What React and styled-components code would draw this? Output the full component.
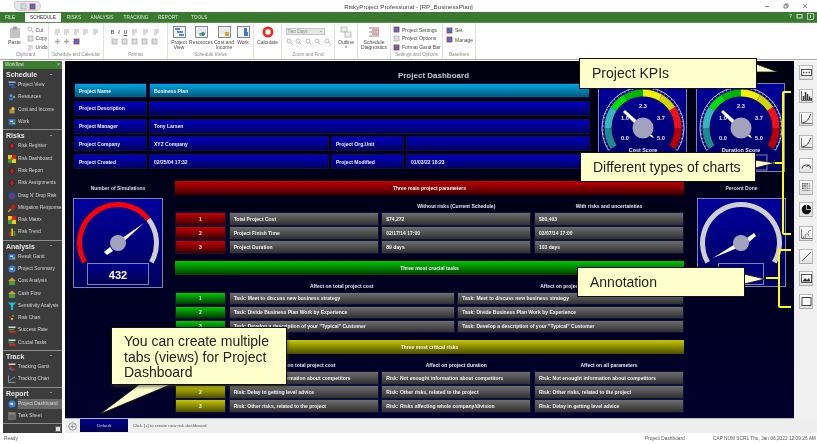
import React from 'react';
import styled, { createGlobalStyle } from 'styled-components';

const GlobalStyle = createGlobalStyle`
  html, body { margin: 0; padding: 0; background: #fff; }
  body { font-family: "Liberation Sans", Arial, sans-serif; }
  * { box-sizing: border-box; }
`;

const fills = {
  blue: 'linear-gradient(#0000c4, #00005c)',
  cyan: 'linear-gradient(#00a4e4, #005a78)',
  gray: 'linear-gradient(#6e6e6e, #303030)',
  red: 'linear-gradient(#c80000, #3c0000)',
  green: 'linear-gradient(#00c800, #003c00)',
  olive: 'linear-gradient(#c8c800, #4c4c00)',
};

const Window = styled.div`
  position: relative;
  width: 817px;
  height: 444px;
  overflow: hidden;
  background: #fff;
  filter: blur(0.35px);
`;

const TitleBar = styled.div`
  position: relative;
  height: 12px;
  display: flex;
  align-items: center;
  justify-content: center;
  font-size: 6.2px;
  color: #444;
`;

const QuickAccess = styled.div`
  position: absolute;
  left: 14px;
  top: 1px;
  width: 27px;
  height: 10px;
  background: #e4e8ec;
  border: 1px solid #c8ccd0;
  border-radius: 2px 6px 6px 6px;
  display: flex;
  align-items: center;
  justify-content: center;
  gap: 2px;
`;

const WindowControls = styled.div`
  position: absolute;
  right: 9px;
  top: 3px;
  display: flex;
  gap: 13px;
  color: #555;
  svg { display: block; }
`;

const TabBar = styled.div`
  position: relative;
  height: 10px;
  background: #3a7a30;
  display: flex;
  align-items: stretch;
  font-size: 4.8px;
  padding-left: 3px;
`;

const FileTab = styled.div`
  width: 22px;
  color: #e8f0e4;
  display: flex;
  align-items: center;
  padding-left: 2px;
`;

const RibbonTab = styled.div`
  width: ${(p) => p.$w}px;
  display: flex;
  align-items: center;
  justify-content: center;
  color: ${(p) => (p.$active ? '#333' : '#dfe9da')};
  background: ${(p) => (p.$active ? '#fff' : 'transparent')};
  margin-top: ${(p) => (p.$active ? '1px' : '0')};
`;

const HelpIcons = styled.div`
  position: absolute;
  right: 3px;
  top: 1px;
  display: flex;
  gap: 4px;
  align-items: center;
  color: #fff;
  svg { display: block; }
`;

const Ribbon = styled.div`
  height: 38px;
  display: flex;
  padding-left: 3px;
  background: #fff;
  border-top: 1px solid #5c9450;
  border-bottom: 1px solid #aaa;
  color: #4a4a4a;
  font-size: 5px;
`;

const Group = styled.div`
  width: ${(p) => p.$w}px;
  border-right: 1px solid #e2e2e2;
  display: flex;
  flex-direction: column;
`;

const GroupBody = styled.div`
  flex: 1;
  display: flex;
  justify-content: ${(p) => p.$justify || 'center'};
  gap: ${(p) => p.$gap || 0}px;
  padding-top: 2px;
  padding-left: ${(p) => p.$left || 0}px;
  min-height: 0;
`;

const GroupLabel = styled.div`
  height: 8px;
  text-align: center;
  color: #8a8a8a;
  font-size: 4.6px;
  line-height: 7px;
  white-space: nowrap;
`;

const BigButton = styled.div`
  width: ${(p) => p.$w || 22}px;
  display: flex;
  flex-direction: column;
  align-items: center;
  text-align: center;
  line-height: 5px;
  white-space: pre-line;
  svg { display: block; margin-bottom: 2px; margin-top: 1px; }
`;

const SmallColumn = styled.div`
  display: flex;
  flex-direction: column;
  gap: 1.5px;
  padding-top: 1px;
`;

const SmallButton = styled.div`
  height: 8px;
  display: flex;
  align-items: center;
  gap: 2px;
  white-space: nowrap;
  svg { display: block; flex: none; }
`;

const IconRows = styled.div`
  display: flex;
  flex-direction: column;
  gap: 3px;
  padding-top: 3px;
`;

const IconRow = styled.div`
  display: flex;
  justify-content: ${(p) => p.$justify || 'flex-start'};
  gap: ${(p) => p.$gap || 2}px;
  align-items: center;
  color: #555;
  font-weight: bold;
  font-size: 5px;
  svg { display: block; }
`;

const Dropdown = styled.div`
  width: 39px;
  height: 7px;
  background: #e6e6e6;
  border: 1px solid #c8c8c8;
  color: #888;
  font-size: 4.6px;
  line-height: 5px;
  padding-left: 1px;
  position: relative;
  &::after {
    content: '';
    position: absolute;
    right: 2px;
    top: 2px;
    border: 1.5px solid transparent;
    border-top-color: #666;
  }
`;

const Body = styled.div`
  height: 372px;
  margin-top: 1px;
  display: flex;
`;

const Sidebar = styled.div`
  width: 59px;
  margin-left: 3px;
  background: #3c3c3c;
  position: relative;
  display: flex;
  flex-direction: column;
`;

const SidebarHead = styled.div`
  height: 8px;
  flex: none;
  background: #3d7d32;
  color: #dbe8d6;
  font-size: 4.6px;
  line-height: 7px;
  padding: 0 2px;
  display: flex;
  justify-content: space-between;
`;

const SidebarSection = styled.div`
  padding: 1px 0;
  border-bottom: 1px solid #8c8c8c;
  &:last-of-type { border-bottom: 0; }
`;

const SectionTitle = styled.div`
  height: 9px;
  padding: 0 10px 0 3px;
  color: #e8e8e8;
  font-size: 7px;
  font-weight: bold;
  line-height: 9px;
  display: flex;
  justify-content: space-between;
  align-items: center;
  &::after {
    content: '';
    border: 1.5px solid transparent;
    border-bottom-color: #ddd;
    margin-top: -2px;
  }
`;

const SidebarItem = styled.div`
  height: 12.3px;
  display: flex;
  align-items: center;
  gap: 2px;
  padding-left: 5px;
  color: #d4d4d4;
  font-size: 4.8px;
  white-space: nowrap;
  svg { display: block; flex: none; }
`;

const ItemLabel = styled.span`
  flex: 1;
  height: 10px;
  line-height: 10px;
  background: ${(p) => (p.$active ? '#6a6a6a' : 'transparent')};
`;

const ExpandButton = styled.div`
  position: absolute;
  right: 1px;
  bottom: 1px;
  width: 6px;
  height: 6px;
  background: #ddd;
  border: 1px solid #666;
`;

const Content = styled.div`
  flex: 1;
  margin-left: 3px;
  min-width: 0;
  display: flex;
  flex-direction: column;
`;

const ContentRow = styled.div`
  height: 358px;
  display: flex;
`;

const Dashboard = styled.div`
  width: 729px;
  background: linear-gradient(#00000f, #00002c);
  padding-left: 8px;
  color: #e6e6f4;
  border-bottom: 1px solid #bbb;
`;

const DashboardTitle = styled.div`
  height: 22px;
  padding-top: 10px;
  text-align: center;
  font-size: 8px;
  line-height: 9px;
  font-weight: bold;
  color: #c8c8d0;
`;

const TopRow = styled.div`
  height: 89px;
  display: flex;
  gap: 8px;
  margin-bottom: 9px;
  padding-left: 1px;
`;

const InfoTable = styled.div`
  width: 516px;
  display: flex;
  flex-direction: column;
  gap: 2.75px;
`;

const InfoRow = styled.div`
  display: grid;
  grid-template-columns: ${(p) => (p.$split ? '73px 180px 73px 1fr' : '73px 1fr')};
  column-gap: 2px;
  height: 15px;
`;

const Cell = styled.div`
  height: 100%;
  background: ${(p) => fills[p.$fill || 'gray']};
  border: 0.5px solid #10103a;
  display: flex;
  align-items: center;
  justify-content: ${(p) => (p.$center ? 'center' : 'flex-start')};
  padding-left: ${(p) => (p.$center ? 0 : 4)}px;
  font-size: 5px;
  font-weight: bold;
  color: #f0f0f8;
  white-space: nowrap;
  overflow: hidden;
`;

const GaugePair = styled.div`
  display: flex;
  gap: 9px;
`;

const GaugePanel = styled.div`
  width: ${(p) => p.$size || 89}px;
  height: ${(p) => p.$size || 89}px;
  background: linear-gradient(#00009c, #00005c);
  border: 1px solid #7f84ac;
  svg { display: block; }
`;

const BottomRow = styled.div`
  display: flex;
  gap: 12px;
`;

const SideColumn = styled.div`
  width: ${(p) => p.$w}px;
  margin-left: ${(p) => p.$left || 0}px;
`;

const SideCaption = styled.div`
  height: 17px;
  padding-top: 4px;
  text-align: center;
  font-size: 5px;
  font-weight: bold;
  color: #d8d8e4;
`;

const CenterColumn = styled.div`
  width: 509px;
  display: flex;
  flex-direction: column;
  gap: 7px;
`;

const Bar = styled.div`
  height: 14px;
  background: ${(p) => fills[p.$fill]};
  display: flex;
  align-items: center;
  justify-content: center;
  font-size: 5px;
  font-weight: bold;
  color: #f4f4f4;
`;

const Columns = styled.div`
  display: grid;
  grid-template-columns: ${(p) => (p.$two ? '51px 226px 227px' : '51px 150px 150px 150px')};
  column-gap: 2.66px;
`;

const ColumnHeads = styled(Columns)`
  height: 17px;
  align-items: end;
  padding-bottom: 3px;
  font-size: 5px;
  font-weight: bold;
  text-align: center;
  color: #e4e4f0;
`;

const Rows = styled.div`
  display: flex;
  flex-direction: column;
  gap: 0.5px;
`;

const DataRow = styled(Columns)`
  height: 13.5px;
`;

const TabStrip = styled.div`
  height: 14px;
  width: 100%;
  flex: none;
  display: flex;
  align-items: stretch;
  background: #eeeeee;
  font-size: 4.4px;
  color: #444;
`;

const AddTab = styled.div`
  width: 15px;
  display: flex;
  align-items: center;
  justify-content: center;
`;

const ActiveTab = styled.div`
  width: 48px;
  background: linear-gradient(#000090, #00004c);
  color: #cfd6f0;
  display: flex;
  align-items: center;
  justify-content: center;
  margin-bottom: 1px;
`;

const TabHint = styled.div`
  display: flex;
  align-items: center;
  padding-left: 5px;
  margin-bottom: 1px;
  color: #555;
`;

const Toolbar = styled.div`
  width: 23px;
  background: #f0f0f0;
  display: flex;
  flex-direction: column;
  align-items: center;
  padding: 4px 0 0 1px;
`;

const ToolButton = styled.div`
  width: 14px;
  height: 14.5px;
  margin-top: ${(p) => p.$top}px;
  background: linear-gradient(#ffffff, #e2e2e2);
  border: 0.5px solid #b8b8b8;
  border-bottom: 1.5px solid #aaa;
  display: flex;
  align-items: center;
  justify-content: center;
  svg { display: block; }
`;

const StatusBar = styled.div`
  height: 11px;
  display: flex;
  align-items: center;
  font-size: 4.8px;
  color: #555;
  padding: 0 1px 0 4px;
`;

const StatusLeft = styled.div`
  width: 641px;
`;

const StatusPage = styled.div`
  width: 68px;
`;

const Callout = styled.div`
  position: absolute;
  left: ${(p) => p.$x}px;
  top: ${(p) => p.$y}px;
  width: ${(p) => p.$w}px;
  height: ${(p) => p.$h}px;
  background: #ffffcc;
  border: 1px solid #111;
  color: #222;
  font-size: 14px;
  line-height: 15.5px;
  padding: ${(p) => p.$pad || '7px 0 0 12px'};
  box-shadow: ${(p) => (p.$shadow ? '1px 2px 3px rgba(60,60,40,0.6)' : 'none')};
`;

const Overlay = styled.svg`
  position: absolute;
  left: 0;
  top: 0;
  pointer-events: none;
`;

const polar = (cx, cy, r, deg) => {
  const a = ((deg - 90) * Math.PI) / 180;
  return [cx + r * Math.cos(a), cy + r * Math.sin(a)];
};

const arcPath = (cx, cy, r, from, to) => {
  const [x1, y1] = polar(cx, cy, r, from);
  const [x2, y2] = polar(cx, cy, r, to);
  const large = to - from > 180 ? 1 : 0;
  return `M${x1} ${y1}A${r} ${r} 0 ${large} 1 ${x2} ${y2}`;
};

const bands = [
  [-123, -90, '#1f8a8a'],
  [-90, -57, '#35b8b8'],
  [-57, -30, '#00e000'],
  [-30, 0, '#00b400'],
  [0, 30, '#f0f000'],
  [30, 57, '#d4d400'],
  [57, 90, '#f21212'],
  [90, 123, '#bb0000'],
];

const scoreLabels = [
  ['0.0', -18, 12],
  ['1.0', -18, -8],
  ['2.3', 0, -20],
  ['3.7', 18, -8],
  ['5.0', 18, 12],
];

const ScoreGauge = ({ caption, valueX }) => {
  const c = 44;
  const ticks = [];
  for (let d = -123; d <= 123; d += 6) {
    const [x1, y1] = polar(c, c, 41, d);
    const [x2, y2] = polar(c, c, d % 30 === 0 ? 37 : 39, d);
    ticks.push(<line key={d} x1={x1} y1={y1} x2={x2} y2={y2} stroke="#e8e8f8" strokeWidth="0.6" />);
  }
  return (
    <GaugePanel>
      <svg width="87" height="87" viewBox="0 0 87 87">
        <path d={arcPath(c, c, 41, -123, 123)} fill="none" stroke="#e8e8f8" strokeWidth="0.8" />
        {ticks}
        {bands.map(([a, b, col]) => (
          <path key={a} d={arcPath(c, c, 35, a, b)} fill="none" stroke={col} strokeWidth="7" />
        ))}
        <polygon points="24,28 26,26 44,42 42,46" fill="#fff" />
        <polygon points="50,50 53,51 55,54 52,53" fill="#fff" />
        <circle cx={c} cy={c} r="10.5" fill="#a2a2bc" />
        {scoreLabels.map(([t, dx, dy]) => (
          <text key={t} x={c + dx} y={c + dy} fill="#e8e8f8" fontSize="5.6" fontWeight="bold" textAnchor="middle" fontFamily="Liberation Sans">
            {t}
          </text>
        ))}
        <text x={c} y="68" fill="#e8e8f8" fontSize="5.4" fontWeight="bold" textAnchor="middle" fontFamily="Liberation Sans">
          {caption}
        </text>
        <rect x={valueX} y="71" width="49" height="15" fill="#00006c" stroke="#7f84ac" strokeWidth="1" />
      </svg>
    </GaugePanel>
  );
};

const SimulationGauge = () => (
  <GaugePanel $size={90}>
    <svg width="88" height="88" viewBox="0 0 88 88">
      <path d={arcPath(44, 44, 38.5, 52, 120)} fill="none" stroke="#cfcfcf" strokeWidth="5" />
      <path d={arcPath(44, 44, 38.5, -120, 52)} fill="none" stroke="#ff0000" strokeWidth="5" />
      <polygon points="70,24 44,42 46,46" fill="#fff" />
      <polygon points="30,53 36,48 39,52 33,56" fill="#fff" />
      <circle cx="44" cy="44" r="8" fill="#a2a2bc" />
      <rect x="13.5" y="64.5" width="61" height="21" fill="url(#simValue)" stroke="#7f84ac" />
      <defs>
        <linearGradient id="simValue" x1="0" y1="0" x2="0" y2="1">
          <stop offset="0" stopColor="#000090" />
          <stop offset="1" stopColor="#00004c" />
        </linearGradient>
      </defs>
      <text x="44" y="79.5" fill="#fff" fontSize="11" fontWeight="bold" textAnchor="middle" fontFamily="Liberation Sans">
        432
      </text>
    </svg>
  </GaugePanel>
);

const PercentGauge = () => (
  <GaugePanel>
    <svg width="87" height="87" viewBox="0 0 87 87">
      <path d={arcPath(43, 44, 38.5, -120, 120)} fill="none" stroke="#cfcfcf" strokeWidth="5" />
      <polygon points="15,59 42,42 44,47" fill="#fff" />
      <polygon points="49,39 56,34 58,37 51,43" fill="#fff" />
      <circle cx="43" cy="44" r="8" fill="#a2a2bc" />
      <rect x="20.5" y="64.5" width="45" height="21" fill="#00007c" stroke="#7f84ac" />
    </svg>
  </GaugePanel>
);

const Svg = ({ s = 8, w, h, children }) => (
  <svg width={w || s} height={h || s} viewBox={`0 0 ${w || s} ${h || s}`}>
    {children}
  </svg>
);

const sideIcons = {
  gantt: (
    <Svg>
      <rect x="0.5" y="0.5" width="7" height="1.5" fill="#8fb4e8" />
      <rect x="1" y="3" width="5" height="1.5" fill="#3b78d8" />
      <rect x="3" y="5.5" width="4.5" height="1.5" fill="#2a56b0" />
    </Svg>
  ),
  people: (
    <Svg>
      <circle cx="3" cy="2.5" r="1.5" fill="#4c8fe0" />
      <rect x="1" y="4.5" width="4" height="3" fill="#3a6cc0" />
      <circle cx="6" cy="4" r="1.2" fill="#7ab648" />
    </Svg>
  ),
  coin: (
    <Svg>
      <rect x="1.5" y="3" width="5" height="4.5" fill="#b89040" />
      <circle cx="5" cy="2.5" r="1.6" fill="#e8c040" />
    </Svg>
  ),
  work: (
    <Svg>
      <rect x="0.5" y="1" width="7" height="6" fill="#3a6cc0" />
      <rect x="2" y="2.5" width="3" height="1.5" fill="#bcd4f0" />
      <rect x="4" y="4.5" width="3" height="1.5" fill="#74c060" />
    </Svg>
  ),
  risk: (
    <Svg>
      <polygon points="4,0 8,4 4,8 0,4" fill="#2c2c2c" />
      <polygon points="4,1 6,4 4,7 2,4" fill="#d81818" />
    </Svg>
  ),
  riskBlue: (
    <Svg>
      <circle cx="4" cy="4" r="3.6" fill="#1f55c0" />
      <circle cx="4.6" cy="4" r="1.8" fill="#c82020" />
    </Svg>
  ),
  riskDown: (
    <Svg>
      <polygon points="5,0 8,3 5,6 2,3" fill="#c81818" />
      <path d="M0 8L3 5" stroke="#e0a020" strokeWidth="1.4" />
    </Svg>
  ),
  matrix: (
    <Svg>
      <rect width="8" height="8" fill="#e8d020" />
      <rect width="4" height="4" x="4" fill="#d02020" />
      <rect width="4" height="4" y="4" fill="#30a030" />
      <rect width="2.5" height="2.5" x="2.5" y="2.5" fill="#d06020" />
    </Svg>
  ),
  trend: (
    <Svg>
      <rect x="1" y="4" width="1.8" height="4" fill="#d02020" />
      <rect x="3.2" y="0.5" width="1.8" height="7.5" fill="#e0c020" />
      <rect x="5.5" y="3" width="1.8" height="5" fill="#30a030" />
    </Svg>
  ),
  globe: (
    <Svg>
      <circle cx="4" cy="4" r="3.6" fill="#3d82e0" />
      <path d="M2 3h3v2H3z" fill="#d8e8fa" />
    </Svg>
  ),
  money: (
    <Svg>
      <polygon points="4,0.5 8,4 0,4" fill="#d8a030" />
      <rect x="1" y="4" width="6" height="4" fill="#4c9c3c" />
    </Svg>
  ),
  funnel: (
    <Svg>
      <polygon points="0,0.5 8,0.5 5,4 5,8 3,8 3,4" fill="#18c0c8" />
    </Svg>
  ),
  scatter: (
    <Svg>
      <rect x="1" y="2" width="2" height="2" fill="#d02020" />
      <rect x="4" y="1" width="2" height="2" fill="#40a040" />
      <rect x="3" y="4" width="2" height="2" fill="#d8c020" />
    </Svg>
  ),
  stripes: (
    <Svg>
      <rect x="0.5" y="0.5" width="7" height="1.5" fill="#d8d8d8" />
      <rect x="0.5" y="2.8" width="6" height="1.5" fill="#30a040" />
      <rect x="1" y="5" width="6.5" height="2" fill="#d82020" />
    </Svg>
  ),
  trackGantt: (
    <Svg>
      <rect x="0.5" y="0.5" width="7" height="1.5" fill="#d8d8d8" />
      <path d="M1 2.5L7 7" stroke="#d82020" strokeWidth="1.3" />
      <path d="M1 5L5 7.5" stroke="#3a78d8" strokeWidth="1.3" />
    </Svg>
  ),
  trackChart: (
    <Svg>
      <path d="M0.5 0.5V7.5H7.5" stroke="#9aa" fill="none" strokeWidth="0.8" />
      <path d="M1.5 6L4 3.5L7 2" stroke="#40b0b0" fill="none" strokeWidth="1" />
    </Svg>
  ),
  sheet: (
    <Svg>
      <rect x="0.5" y="0.5" width="7" height="7" fill="#666" stroke="#888" strokeWidth="0.5" />
      <rect x="1" y="1" width="6" height="1.5" fill="#888" />
    </Svg>
  ),
};

const sections = [
  {
    title: 'Schedule',
    items: [
      ['gantt', 'Project View'],
      ['people', 'Resources'],
      ['coin', 'Cost and Income'],
      ['work', 'Work'],
    ],
  },
  {
    title: 'Risks',
    items: [
      ['risk', 'Risk Register'],
      ['matrix', 'Risk Dashboard'],
      ['risk', 'Risk Report'],
      ['risk', 'Risk Assignments'],
      ['riskBlue', "Drag N' Drop Risk"],
      ['riskDown', 'Mitigation Response'],
      ['matrix', 'Risk Matrix'],
      ['trend', 'Risk Trend'],
    ],
  },
  {
    title: 'Analysis',
    items: [
      ['work', 'Result Gantt'],
      ['globe', 'Project Summary'],
      ['money', 'Cost Analysis'],
      ['money', 'Cash Flow'],
      ['funnel', 'Sensitivity Analysis'],
      ['scatter', 'Risk Chart'],
      ['stripes', 'Success Rate'],
      ['stripes', 'Crucial Tasks'],
    ],
  },
  {
    title: 'Track',
    items: [
      ['trackGantt', 'Tracking Gantt'],
      ['trackChart', 'Tracking Chart'],
    ],
  },
  {
    title: 'Report',
    items: [
      ['globe', 'Project Dashboard', true],
      ['sheet', 'Task Sheet'],
    ],
  },
];

const Faint = ({ kind = 0 }) => (
  <Svg s={7}>
    {kind === 0 && <path d="M1 2h5M1 4h5M1 6h3" stroke="#a8a8a8" strokeWidth="0.9" />}
    {kind === 1 && <rect x="1" y="1" width="5" height="5" fill="#ddd" stroke="#aaa" strokeWidth="0.7" />}
    {kind === 2 && <path d="M3.5 1v5M1 3.5h5" stroke="#a8a8a8" strokeWidth="1.3" />}
    {kind === 3 && <rect x="1" y="1" width="5" height="5" fill="#3a78d8" stroke="#c83020" strokeWidth="0.8" />}
    {kind === 4 && (
      <>
        <circle cx="3" cy="3" r="2" fill="none" stroke="#aaa" strokeWidth="0.8" />
        <path d="M4.5 4.5L6.5 6.5" stroke="#aaa" strokeWidth="1" />
      </>
    )}
  </Svg>
);

const ViewIcon = ({ tone }) => (
  <Svg w={13} h={12}>
    <rect x="0.5" y="0.5" width="12" height="11" fill="#f4f4f4" stroke="#5a6a80" strokeWidth="0.8" />
    {tone === 'gantt' && <path d="M2 3L7 3M4 6H10M6 9H11" stroke="#2a66c8" strokeWidth="1.4" />}
    {tone === 'res' && (
      <>
        <path d="M2 3H11M2 5H11M2 7H11" stroke="#c8c8c8" strokeWidth="0.6" />
        <circle cx="8" cy="8" r="2" fill="#3a78a8" />
        <circle cx="5.5" cy="8.5" r="1.4" fill="#70a850" />
      </>
    )}
    {tone === 'cost' && (
      <>
        <path d="M2 3H11M2 5H11M2 7H11" stroke="#d4d4c0" strokeWidth="0.6" />
        <rect x="7" y="6" width="4" height="4" fill="#d8a030" />
      </>
    )}
    {tone === 'work' && <path d="M7 2H10V6H11V10H7z" fill="#3a78d8" />}
  </Svg>
);

const ToolIcon = ({ kind }) => (
  <Svg s={11}>
    {kind === 'kpi' && (
      <>
        <rect x="0.5" y="2.5" width="10" height="6" fill="#fff" stroke="#444" strokeWidth="0.9" />
        <path d="M2 5.5h1.4M4.8 5.5h1.4M7.6 5.5h1.4" stroke="#444" strokeWidth="1.3" />
      </>
    )}
    {kind === 'bars' && (
      <>
        <path d="M0.5 1V10.5H11" stroke="#444" fill="none" strokeWidth="0.8" />
        <path d="M2.5 10V6M4.5 10V2M6.5 10V4M8.5 10V6.5M10.2 10V8" stroke="#333" strokeWidth="1.4" />
      </>
    )}
    {kind === 'curve' && (
      <>
        <path d="M0.5 1V10.5H11" stroke="#555" fill="none" strokeWidth="0.8" />
        <path d="M1.5 9.5C6 9.5 8 6 9.5 1" stroke="#222" fill="none" strokeWidth="0.9" />
      </>
    )}
    {kind === 'gauge' && (
      <>
        <path d="M1 8.5A4.6 4.6 0 0 1 10 8.5" stroke="#444" fill="none" strokeWidth="1" />
        <path d="M5.5 7L8 4.5" stroke="#222" strokeWidth="1" />
      </>
    )}
    {kind === 'grid' &&
      [1, 3.2, 5.4, 7.6].map((y) =>
        [1, 3.2, 5.4, 7.6].map((x) => (
          <rect key={`${x}-${y}`} x={x} y={y} width="1.6" height="1.6" fill={x + y > 8 ? '#999' : '#666'} />
        ))
      )}
    {kind === 'pie' && (
      <>
        <circle cx="5.5" cy="5.5" r="4.8" fill="#111" />
        <path d="M5.5 5.5V0.7M5.5 5.5H10.3" stroke="#fff" strokeWidth="0.7" />
      </>
    )}
    {kind === 'scatter' && (
      <>
        <path d="M0.5 1V10.5H11" stroke="#555" fill="none" strokeWidth="0.8" />
        <path d="M2 9h1M4 7h1M5.5 6h1M7 4h1M8.5 2.5h1M4 9h1M7 7h1" stroke="#333" strokeWidth="1" />
      </>
    )}
    {kind === 'line' && <path d="M1 10L10 1" stroke="#444" strokeWidth="0.9" />}
    {kind === 'image' && (
      <>
        <rect x="0.5" y="1.5" width="10" height="8" fill="#fff" stroke="#444" strokeWidth="0.9" />
        <path d="M1.5 8.5L4 5L6 7L8 5L9.5 8.5Z" fill="#333" />
      </>
    )}
    {kind === 'rect' && <rect x="1" y="1.5" width="9" height="8" fill="#fff" stroke="#444" strokeWidth="1" />}
  </Svg>
);

const tools = [
  ['kpi', 0],
  ['bars', 9],
  ['curve', 8.5],
  ['curve', 9],
  ['gauge', 8.5],
  ['grid', 7.5],
  ['pie', 7.5],
  ['scatter', 9.5],
  ['line', 8.5],
  ['image', 7.5],
  ['rect', 8.5],
];

const tasks = ['Task: Meet to discuss new business strategy', 'Task: Divide Business Plan Work by Experience', 'Task: Develop a description of your "Typical" Customer'];

const params = [
  ['Total Project Cost', '$74,272', '$80,403'],
  ['Project Finish Time', '02/17/14 17:00', '03/07/14 17:00'],
  ['Project Duration', '89 days', '103 days'],
];

const risks = [
  ['Risk: Not enought information about competitors', 'Risk: Not enought information about competitors', 'Risk: Not enought information about competitors'],
  ['Risk: Delay in getting level advice', 'Risk: Other risks, related to the project', 'Risk: Other risks, related to the project'],
  ['Risk: Other risks, related to the project', 'Risk: Risks affecting whole company/division', 'Risk: Delay in getting level advice'],
];

const NumberedRows = ({ fill, rows, two }) => (
  <Rows>
    {rows.map((cells, i) => (
      <DataRow key={i} $two={two}>
        <Cell $fill={fill} $center>{i + 1}</Cell>
        {cells.map((c, j) => (
          <Cell key={j}>{c}</Cell>
        ))}
      </DataRow>
    ))}
  </Rows>
);

export default function App() {
  return (
    <Window>
      <GlobalStyle />
      <TitleBar>
        <QuickAccess>
          <Faint kind={1} />
          <Faint kind={3} />
        </QuickAccess>
        RiskyProject Professional - [RP_BusinessPlan]
        <WindowControls>
          <Svg s={6}><path d="M1 3.5H5" stroke="#555" strokeWidth="0.7" /></Svg>
          <Svg s={6}><path d="M1 2H4V5H1zM2 2V1H5V4H4" fill="none" stroke="#555" strokeWidth="0.7" /></Svg>
          <Svg s={6}><path d="M1 1L5 5M5 1L1 5" stroke="#555" strokeWidth="0.7" /></Svg>
        </WindowControls>
      </TitleBar>

      <TabBar>
        <FileTab>FILE</FileTab>
        <RibbonTab $w={36} $active>SCHEDULE</RibbonTab>
        <RibbonTab $w={26}>RISKS</RibbonTab>
        <RibbonTab $w={30}>ANALYSIS</RibbonTab>
        <RibbonTab $w={38}>TRACKING</RibbonTab>
        <RibbonTab $w={26}>REPORT</RibbonTab>
        <RibbonTab $w={36}>TOOLS</RibbonTab>
        <HelpIcons>
          <span>?</span>
          <Svg s={7}><rect x="1" y="1.5" width="5" height="3.5" fill="none" stroke="#fff" strokeWidth="0.8" /></Svg>
          <Svg s={7}><rect x="0.5" y="0.5" width="6" height="6" fill="none" stroke="#fff" strokeWidth="0.6" /><path d="M3.5 2V5" stroke="#fff" strokeWidth="1" /></Svg>
        </HelpIcons>
      </TabBar>

      <Ribbon>
        <Group $w={46}>
          <GroupBody $gap={3} $left={2}>
            <BigButton $w={18}>
              <Svg w={12} h={12}>
                <rect x="1" y="2" width="10" height="10" fill="#c4c4c4" />
                <rect x="4" y="0.5" width="4" height="3" fill="#a0a0a0" />
              </Svg>
              Paste
            </BigButton>
            <SmallColumn>
              <SmallButton><Faint kind={4} />Cut</SmallButton>
              <SmallButton><Faint kind={1} />Copy</SmallButton>
              <SmallButton><Faint kind={0} />Undo</SmallButton>
            </SmallColumn>
          </GroupBody>
          <GroupLabel>Clipboard</GroupLabel>
        </Group>
        <Group $w={55}>
          <GroupBody>
            <IconRows>
              <IconRow $gap={2.5}>
                <Faint /><Faint /><Faint /><Faint /><Faint />
              </IconRow>
              <IconRow $gap={2.5}>
                <Faint kind={2} /><Faint kind={2} /><Faint kind={3} />
              </IconRow>
            </IconRows>
          </GroupBody>
          <GroupLabel>Schedule and Calendar</GroupLabel>
        </Group>
        <Group $w={64}>
          <GroupBody>
            <IconRows>
              <IconRow $gap={4}>
                <span>B</span><i>I</i><u>U</u><Faint /><Faint /><Faint />
              </IconRow>
              <IconRow $gap={3}>
                <Faint kind={1} /><Faint kind={1} /><Faint kind={1} /><Faint kind={1} /><Faint kind={1} />
              </IconRow>
            </IconRows>
          </GroupBody>
          <GroupLabel>Format</GroupLabel>
        </Group>
        <Group $w={86}>
          <GroupBody $justify="flex-start">
            <BigButton $w={22}><ViewIcon tone="gantt" />{'Project\nView'}</BigButton>
            <BigButton $w={22}><ViewIcon tone="res" />Resources</BigButton>
            <BigButton $w={24}><ViewIcon tone="cost" />{'Cost and\nIncome'}</BigButton>
            <BigButton $w={14}><ViewIcon tone="work" />Work</BigButton>
          </GroupBody>
          <GroupLabel>Schedule Views</GroupLabel>
        </Group>
        <Group $w={28}>
          <GroupBody>
            <BigButton $w={26}>
              <Svg w={12} h={12}>
                <circle cx="6" cy="6" r="5.5" fill="#e03020" />
                <rect x="3.5" y="3.5" width="5" height="5" rx="1" fill="#fff" />
              </Svg>
              Calculate
            </BigButton>
          </GroupBody>
          <GroupLabel />
        </Group>
        <Group $w={53}>
          <GroupBody>
            <IconRows>
              <Dropdown>Two Days</Dropdown>
              <IconRow $gap={2.5}>
                <Faint kind={4} /><Faint kind={4} /><Faint kind={4} /><Faint kind={4} /><Faint kind={4} />
              </IconRow>
            </IconRows>
          </GroupBody>
          <GroupLabel>Zoom and Find</GroupLabel>
        </Group>
        <Group $w={23}>
          <GroupBody>
            <BigButton $w={22}>
              <Svg w={12} h={12}>
                <rect x="1" y="1" width="6" height="5" fill="#eee" stroke="#aaa" strokeWidth="0.7" />
                <rect x="5" y="6" width="6" height="5" fill="#eee" stroke="#aaa" strokeWidth="0.7" />
              </Svg>
              {'Outline\n˅'}
            </BigButton>
          </GroupBody>
          <GroupLabel />
        </Group>
        <Group $w={33}>
          <GroupBody>
            <BigButton $w={32}>
              <Svg w={12} h={12}>
                <path d="M1 2H11M1 6H11M1 10H11" stroke="#888" strokeWidth="1.2" />
                <path d="M4 4H11M4 8H11" stroke="#d84030" strokeWidth="1" />
              </Svg>
              {'Schedule\nDiagnostics'}
            </BigButton>
          </GroupBody>
          <GroupLabel />
        </Group>
        <Group $w={52}>
          <GroupBody $justify="flex-start" $left={2}>
            <SmallColumn>
              <SmallButton><Faint kind={3} />Project Settings</SmallButton>
              <SmallButton><Faint kind={1} />Project Options</SmallButton>
              <SmallButton><Faint kind={3} />Format Gantt Bar</SmallButton>
            </SmallColumn>
          </GroupBody>
          <GroupLabel>Settings and Options</GroupLabel>
        </Group>
        <Group $w={33}>
          <GroupBody $justify="flex-start" $left={3}>
            <SmallColumn>
              <SmallButton><Faint kind={3} />Set</SmallButton>
              <SmallButton><Faint kind={3} />Manage</SmallButton>
            </SmallColumn>
          </GroupBody>
          <GroupLabel>Baselines</GroupLabel>
        </Group>
      </Ribbon>

      <Body>
        <Sidebar>
          <SidebarHead>
            <span>Workflow</span>
            <span>×</span>
          </SidebarHead>
          {sections.map((s) => (
            <SidebarSection key={s.title}>
              <SectionTitle>{s.title}</SectionTitle>
              {s.items.map(([icon, label, active]) => (
                <SidebarItem key={label}>
                  {sideIcons[icon]}
                  <ItemLabel $active={active}>{label}</ItemLabel>
                </SidebarItem>
              ))}
            </SidebarSection>
          ))}
          <ExpandButton />
        </Sidebar>

        <Content>
          <ContentRow>
            <Dashboard>
              <DashboardTitle>Project Dashboard</DashboardTitle>
              <TopRow>
                <InfoTable>
                  <InfoRow>
                    <Cell $fill="cyan">Project Name</Cell>
                    <Cell $fill="cyan">Business Plan</Cell>
                  </InfoRow>
                  <InfoRow>
                    <Cell $fill="blue">Project Description</Cell>
                    <Cell $fill="blue" />
                  </InfoRow>
                  <InfoRow>
                    <Cell $fill="blue">Project Manager</Cell>
                    <Cell $fill="blue">Tony Larsen</Cell>
                  </InfoRow>
                  <InfoRow $split>
                    <Cell $fill="blue">Project Company</Cell>
                    <Cell $fill="blue">XYZ Company</Cell>
                    <Cell $fill="blue">Project Org.Unit</Cell>
                    <Cell $fill="blue" />
                  </InfoRow>
                  <InfoRow $split>
                    <Cell $fill="blue">Project Created</Cell>
                    <Cell $fill="blue">02/25/04 17:32</Cell>
                    <Cell $fill="blue">Project Modified</Cell>
                    <Cell $fill="blue">01/03/22 18:23</Cell>
                  </InfoRow>
                </InfoTable>
                <GaugePair>
                  <ScoreGauge caption="Cost Score" valueX={20} />
                  <ScoreGauge caption="Duration Score" valueX={21} />
                </GaugePair>
              </TopRow>

              <BottomRow>
                <SideColumn $w={90}>
                  <SideCaption>Number of Simulations</SideCaption>
                  <SimulationGauge />
                </SideColumn>

                <CenterColumn>
                  <div>
                    <Bar $fill="red">Three main project parameters</Bar>
                    <ColumnHeads>
                      <span />
                      <span />
                      <span>Without risks (Current Schedule)</span>
                      <span>With risks and uncertainties</span>
                    </ColumnHeads>
                    <NumberedRows fill="red" rows={params} />
                  </div>
                  <div>
                    <Bar $fill="green">Three most crucial tasks</Bar>
                    <ColumnHeads $two>
                      <span />
                      <span>Affect on total project cost</span>
                      <span>Affect on project duration</span>
                    </ColumnHeads>
                    <NumberedRows fill="green" rows={tasks.map((t) => [t, t])} two />
                  </div>
                  <div>
                    <Bar $fill="olive">Three most critical risks</Bar>
                    <ColumnHeads>
                      <span />
                      <span>Affect on total project cost</span>
                      <span>Affect on project duration</span>
                      <span>Affect on all parameters</span>
                    </ColumnHeads>
                    <NumberedRows fill="olive" rows={risks} />
                  </div>
                </CenterColumn>

                <SideColumn $w={89} $left={1}>
                  <SideCaption>Percent Done</SideCaption>
                  <PercentGauge />
                </SideColumn>
              </BottomRow>
            </Dashboard>

            <Toolbar>
              {tools.map(([kind, top], i) => (
                <ToolButton key={i} $top={top}>
                  <ToolIcon kind={kind} />
                </ToolButton>
              ))}
            </Toolbar>
          </ContentRow>

          <TabStrip>
            <AddTab>
              <Svg s={9}>
                <circle cx="4.5" cy="4.5" r="3.8" fill="#ddd" stroke="#888" strokeWidth="0.7" />
                <path d="M4.5 2.5V6.5M2.5 4.5H6.5" stroke="#888" strokeWidth="0.6" />
              </Svg>
            </AddTab>
            <ActiveTab>Default</ActiveTab>
            <TabHint>Click [+] to create new risk dashboard</TabHint>
          </TabStrip>
        </Content>
      </Body>

      <StatusBar>
        <StatusLeft>Ready</StatusLeft>
        <StatusPage>Project Dashboard</StatusPage>
        <span>CAP NUM SCRL Thu, Jan 06,2022 12:09:26 AM</span>
      </StatusBar>

      <Overlay width="817" height="444" viewBox="0 0 817 444">
        <path d="M791 92H784Q783 92 783 93V233Q783 234 784 234H791M783 163H773" fill="none" stroke="#ffff00" strokeWidth="2" />
        <path d="M791 250H780Q779 250 779 251V306Q779 307 780 307H791M779 278H766" fill="none" stroke="#ffff00" strokeWidth="2" />
        <polygon points="756,64 778,72 756,72" fill="#ffffcc" stroke="#111" strokeWidth="0.8" />
        <polygon points="755,160 775,163 755,168" fill="#ffffcc" stroke="#111" strokeWidth="0.8" />
        <polygon points="744,274 765,279 744,284" fill="#ffffcc" stroke="#111" strokeWidth="0.8" />
        <polygon points="140,384 100,414 172,384" fill="#ffffcc" stroke="#111" strokeWidth="0.8" />
      </Overlay>
      <Callout $x={579} $y={58} $w={178} $h={31}>Project KPIs</Callout>
      <Callout $x={580} $y={152} $w={176} $h={30}>Different types of charts</Callout>
      <Callout $x={577} $y={267} $w={168} $h={30}>Annotation</Callout>
      <Callout $x={111} $y={327} $w={176} $h={58} $pad="6px 0 0 12px" $shadow>
        You can create multiple tabs (views) for Project Dashboard
      </Callout>
    </Window>
  );
}
